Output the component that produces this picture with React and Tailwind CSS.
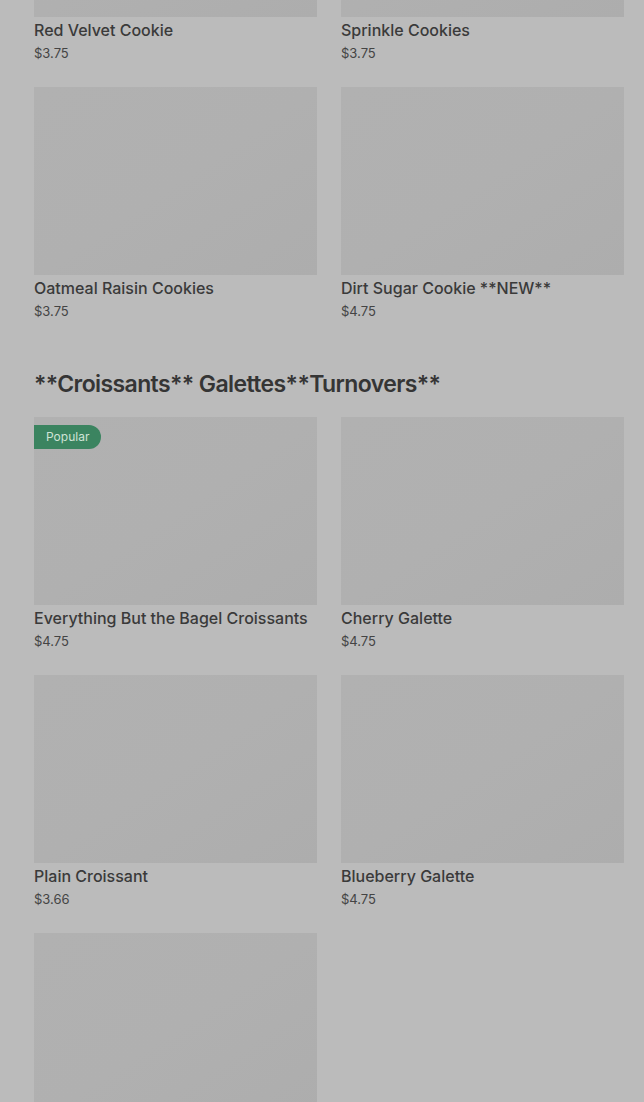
const sec1 = [
  { name: "Red Velvet Cookie", price: "$3.75" },
  { name: "Sprinkle Cookies", price: "$3.75" },
  { name: "Oatmeal Raisin Cookies", price: "$3.75" },
  { name: "Dirt Sugar Cookie **NEW**", price: "$4.75" },
];
const sec2 = [
  { name: "Everything But the Bagel Croissants", price: "$4.75", popular: true },
  { name: "Cherry Galette", price: "$4.75" },
  { name: "Plain Croissant", price: "$3.66" },
  { name: "Blueberry Galette", price: "$4.75" },
  { name: "", price: "" },
];

function Card({ item }) {
  return (
    <div className="flex flex-col">
      <div className="relative h-[188px] bg-gradient-to-br from-[#b1b1b1] via-[#b0b0b0] to-[#adadad]">
        {item.popular && (
          <div className="absolute left-0 top-[8px] h-[24px] px-[12px] flex items-center rounded-r-full bg-[#3b8460] text-[12px] text-[#cfe3d6]">
            Popular
          </div>
        )}
      </div>
      {item.name && (
        <>
          <div className="mt-[3px] h-[20px] text-[16px] leading-[20px] font-medium text-[#3a3a3a] whitespace-nowrap">
            {item.name}
          </div>
          <div className="mt-[3px] h-[20px] text-[13px] leading-[20px] text-[#444444]">
            {item.price}
          </div>
        </>
      )}
    </div>
  );
}

export default function App() {
  return (
    <div
      className="w-[644px] h-[1102px] overflow-hidden bg-[#bbbbbb]"
      style={{ fontFamily: "Inter, 'Noto Sans', sans-serif" }}
    >
      <div className="pl-[34px] pr-[20px] mt-[-171px]">
        <div className="grid grid-cols-2 gap-x-[24px] gap-y-[24px]">
          {sec1.map((it) => (
            <Card key={it.name} item={it} />
          ))}
        </div>
        <h2 className="mt-[49px] mb-[19px] h-[28px] text-[23px] leading-[28px] font-semibold tracking-[-0.6px] text-[#353535] whitespace-nowrap">
          **Croissants** Galettes**Turnovers**
        </h2>
        <div className="grid grid-cols-2 gap-x-[24px] gap-y-[24px]">
          {sec2.map((it, i) => (
            <Card key={i} item={it} />
          ))}
        </div>
      </div>
    </div>
  );
}
